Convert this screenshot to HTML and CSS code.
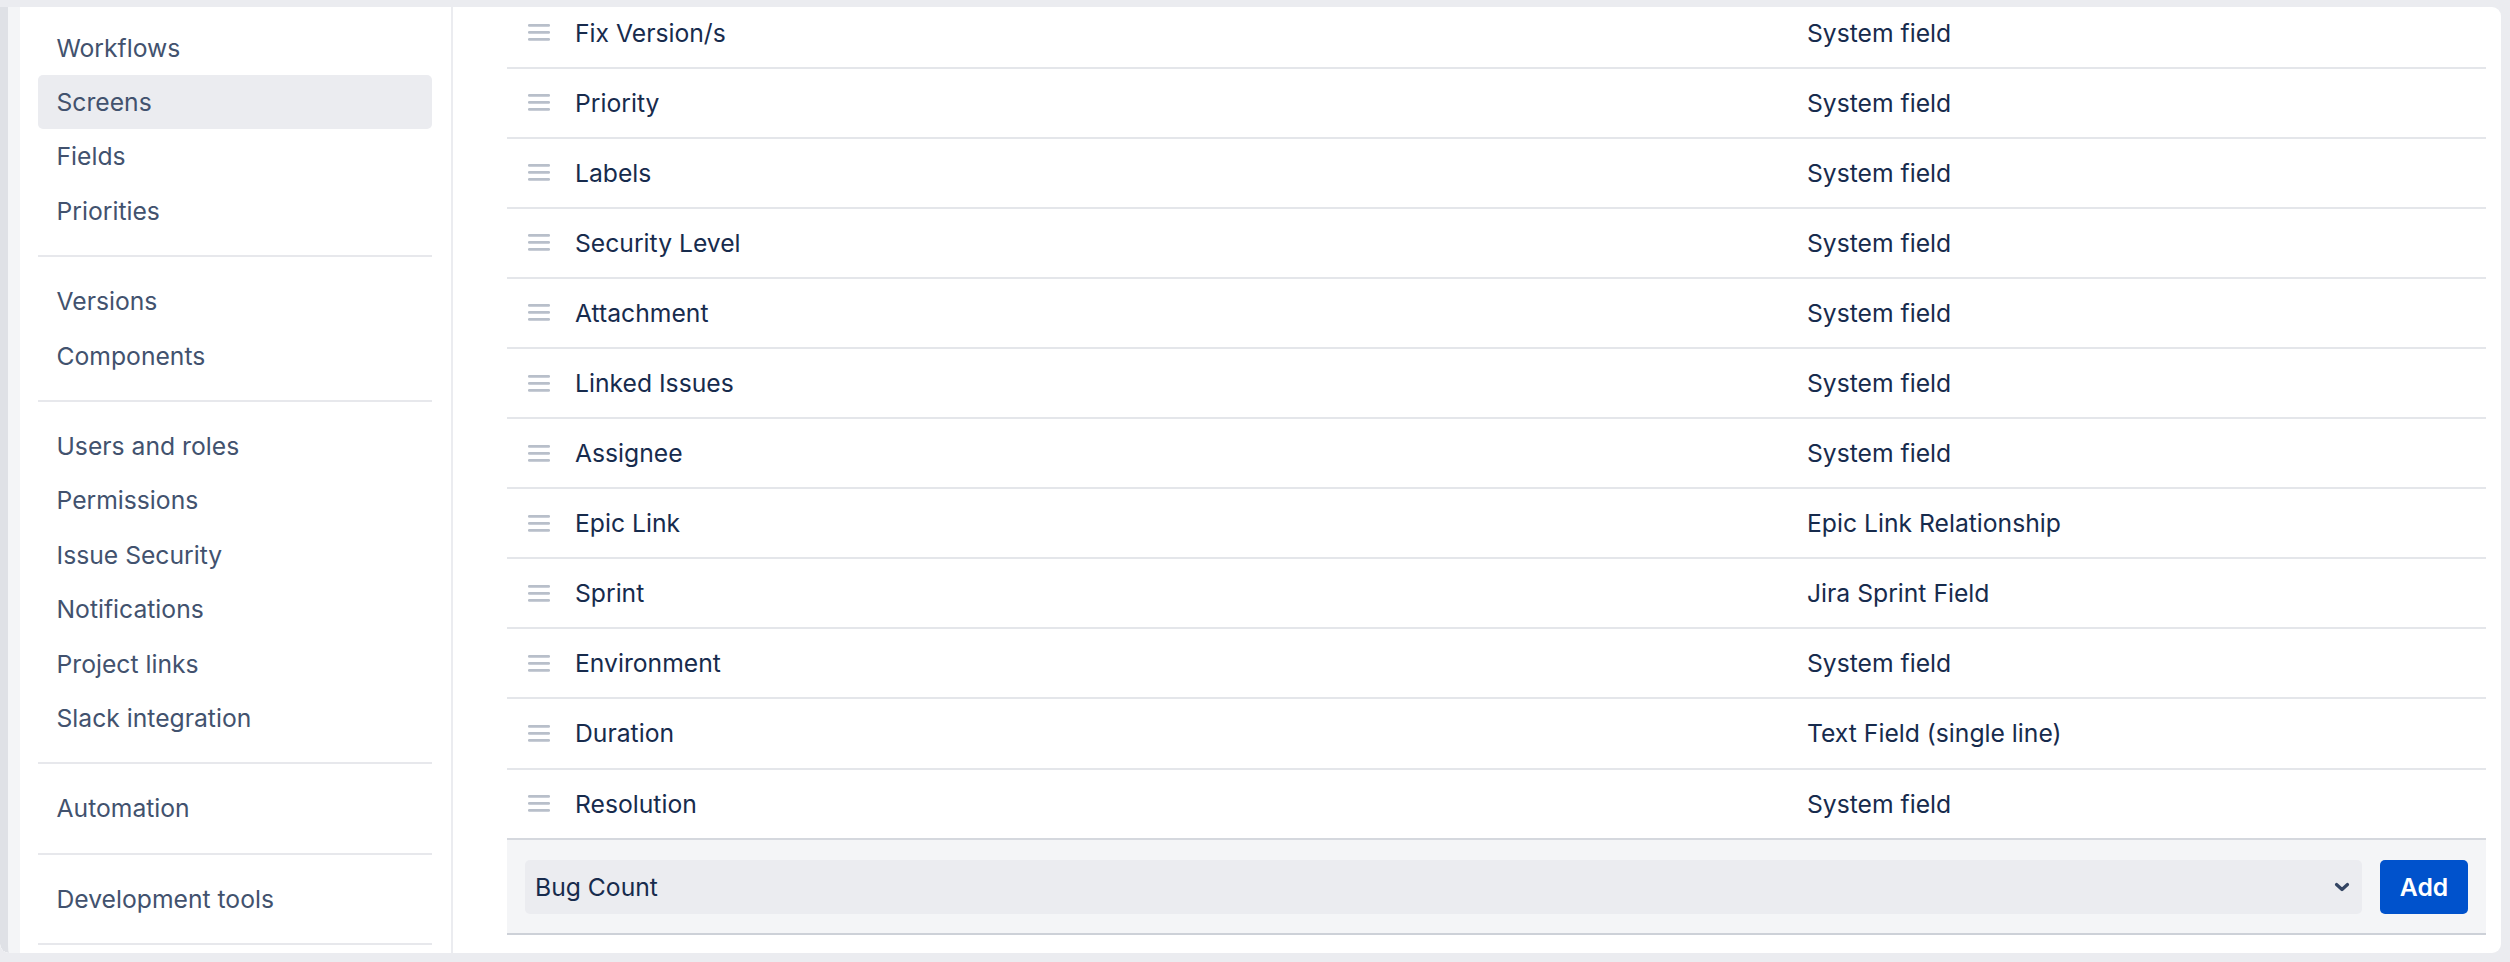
FILE: index.html
```html
<!DOCTYPE html>
<html lang="en">
<head>
    <title>Screen fields</title>
    <link rel="stylesheet" href="styles.css">
</head>
<body>
    <div class="frame">
        <div class="gutter"></div>
        <nav class="sidebar">
            <a class="nav-item">Workflows</a>
            <a class="nav-item active">Screens</a>
            <a class="nav-item">Fields</a>
            <a class="nav-item">Priorities</a>
            <div class="nav-divider"></div>
            <a class="nav-item">Versions</a>
            <a class="nav-item">Components</a>
            <div class="nav-divider"></div>
            <a class="nav-item">Users and roles</a>
            <a class="nav-item">Permissions</a>
            <a class="nav-item">Issue Security</a>
            <a class="nav-item">Notifications</a>
            <a class="nav-item">Project links</a>
            <a class="nav-item">Slack integration</a>
            <div class="nav-divider"></div>
            <a class="nav-item">Automation</a>
            <div class="nav-divider"></div>
            <a class="nav-item">Development tools</a>
            <div class="nav-divider"></div>
        </nav>
        <main class="content">
            <div class="field-table" id="fieldTable"></div>
            <div class="add-row">
                <div class="field-select">
                    <span>Bug Count</span>
                    <svg class="chevron" width="16" height="10" viewBox="0 0 16 10">
                        <path d="M2.5 2.5 L8 7.5 L13.5 2.5" fill="none" stroke="#344563" stroke-width="3.2" stroke-linecap="round" stroke-linejoin="round"/>
                    </svg>
                </div>
                <button class="add-btn">Add</button>
            </div>
        </main>
    </div>

    <script>
        const fields = [
            ['Fix Version/s', 'System field'],
            ['Priority', 'System field'],
            ['Labels', 'System field'],
            ['Security Level', 'System field'],
            ['Attachment', 'System field'],
            ['Linked Issues', 'System field'],
            ['Assignee', 'System field'],
            ['Epic Link', 'Epic Link Relationship'],
            ['Sprint', 'Jira Sprint Field'],
            ['Environment', 'System field'],
            ['Duration', 'Text Field (single line)'],
            ['Resolution', 'System field']
        ];

        const handle = '<svg width="22" height="17" viewBox="0 0 22 17">' +
            '<rect x="0" y="0" width="22" height="2.8" rx="1.2"/>' +
            '<rect x="0" y="7" width="22" height="2.8" rx="1.2"/>' +
            '<rect x="0" y="14" width="22" height="2.8" rx="1.2"/></svg>';

        const table = document.getElementById('fieldTable');
        fields.forEach(([name, type]) => {
            const row = document.createElement('div');
            row.className = 'field-row';
            row.innerHTML = `<span class="drag-handle">${handle}</span>` +
                `<span class="field-name">${name}</span>` +
                `<span class="field-type">${type}</span>`;
            table.appendChild(row);
        });
    </script>
</body>
</html>
```

FILE: styles.css
```css
html, body {
    margin: 0;
    height: 100%;
}
body {
    font-family: Inter, "Noto Sans", sans-serif;
    font-size: 24.7px;
    background-color: #ebecf0;
    padding: 7px 9px 9px 0;
    box-sizing: border-box;
    color: #172b4d;
}
.frame {
    display: flex;
    height: 100%;
    background: #ffffff;
    border-radius: 0 9px 9px 9px;
    overflow: hidden;
}
.gutter {
    width: 12px;
    flex-shrink: 0;
    background: #f4f5f7;
    border-left: 8px solid #dfe1e6;
    border-bottom-left-radius: 9px;
}
.sidebar {
    width: 394px;
    flex-shrink: 0;
    padding: 13.5px 19px 0 18px;
    border-right: 2px solid #ebecf0;
    display: flex;
    flex-direction: column;
}
.nav-item {
    height: 54.4px;
    display: flex;
    align-items: center;
    padding-left: 18.5px;
    border-radius: 5px;
    color: #42526e;
    text-decoration: none;
    flex-shrink: 0;
}
.nav-item.active {
    background-color: #ebecf0;
}
.nav-divider {
    height: 2px;
    background: #e7e8ec;
    margin: 17px 0;
    flex-shrink: 0;
}
.content {
    flex: 1;
    min-width: 0;
    padding: 0 15px 0 54px;
    overflow: hidden;
}
.field-table {
    margin-top: -8.5px;
}
.field-row {
    display: grid;
    grid-template-columns: 68px 1232px 1fr;
    align-items: center;
    height: 70.1px;
    box-sizing: border-box;
    border-bottom: 2px solid #e4e6ea;
}
.field-row:last-child {
    border-bottom: 2px solid #d5d8de;
}
.drag-handle {
    padding-left: 21px;
    display: flex;
    fill: #b8bfca;
}
.add-row {
    display: flex;
    gap: 18px;
    align-items: center;
    padding: 20px 18px 19px 18px;
    background: #f4f5f7;
    border-bottom: 2px solid #cdd1d8;
}
.field-select {
    flex: 1;
    height: 54px;
    display: flex;
    align-items: center;
    justify-content: space-between;
    padding: 0 12px 0 10px;
    background: #ebecf0;
    border-radius: 5px;
}
.chevron {
    display: block;
}
.add-btn {
    width: 88px;
    height: 54px;
    border: none;
    border-radius: 5px;
    background-color: #0052cc;
    color: #ffffff;
    font-family: Inter, "Noto Sans", sans-serif;
    font-size: 24.7px;
    font-weight: 600;
    cursor: pointer;
}
```
